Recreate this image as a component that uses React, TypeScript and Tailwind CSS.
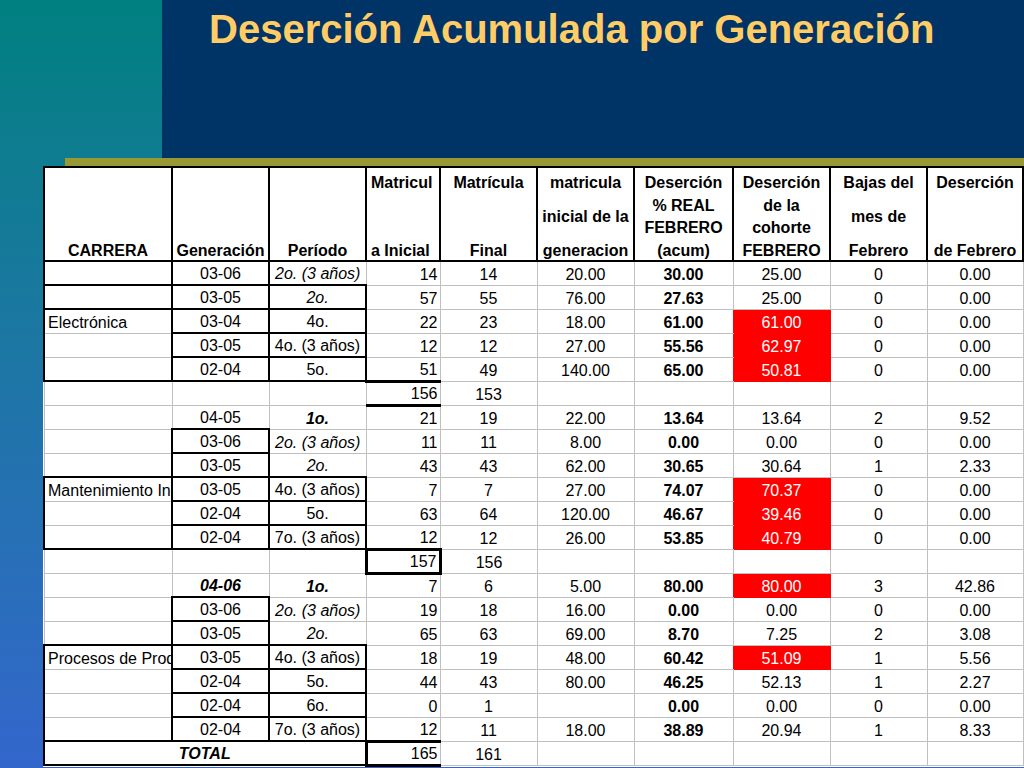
type Row = {
  c: string;
  g: string;
  p: string;
  mi: string;
  mf: string;
  mig: string;
  dr: string;
  dc: string;
  b: string;
  df: string;
  red?: boolean;
  gbi?: boolean;
  total?: boolean;
  // black borders for the first four columns
  bd: [string, string, string, string];
};

const rows: Row[] = [
  { c: "", g: "03-06", p: "2o. (3 años)", mi: "14", mf: "14", mig: "20.00", dr: "30.00", dc: "25.00", b: "0", df: "0.00", bd: ["lb", "lrb", "b", ""] },
  { c: "", g: "03-05", p: "2o.", mi: "57", mf: "55", mig: "76.00", dr: "27.63", dc: "25.00", b: "0", df: "0.00", bd: ["lb", "lrb", "rb", ""] },
  { c: "Electrónica", g: "03-04", p: "4o.", mi: "22", mf: "23", mig: "18.00", dr: "61.00", dc: "61.00", b: "0", df: "0.00", red: true, bd: ["l", "lrb", "rb", ""] },
  { c: "", g: "03-05", p: "4o. (3 años)", mi: "12", mf: "12", mig: "27.00", dr: "55.56", dc: "62.97", b: "0", df: "0.00", red: true, bd: ["l", "lrb", "rb", ""] },
  { c: "", g: "02-04", p: "5o.", mi: "51", mf: "49", mig: "140.00", dr: "65.00", dc: "50.81", b: "0", df: "0.00", red: true, bd: ["lb", "lrb", "rb", "B"] },
  { c: "", g: "", p: "", mi: "156", mf: "153", mig: "", dr: "", dc: "", b: "", df: "", bd: ["", "", "", "B"] },
  { c: "", g: "04-05", p: "1o.", mi: "21", mf: "19", mig: "22.00", dr: "13.64", dc: "13.64", b: "2", df: "9.52", bd: ["", "", "", ""] },
  { c: "", g: "03-06", p: "2o. (3 años)", mi: "11", mf: "11", mig: "8.00", dr: "0.00", dc: "0.00", b: "0", df: "0.00", bd: ["", "tlrb", "", ""] },
  { c: "", g: "03-05", p: "2o.", mi: "43", mf: "43", mig: "62.00", dr: "30.65", dc: "30.64", b: "1", df: "2.33", bd: ["", "lrb", "", ""] },
  { c: "Mantenimiento Industrial", g: "03-05", p: "4o. (3 años)", mi: "7", mf: "7", mig: "27.00", dr: "74.07", dc: "70.37", b: "0", df: "0.00", red: true, bd: ["tl", "lrb", "trb", ""] },
  { c: "", g: "02-04", p: "5o.", mi: "63", mf: "64", mig: "120.00", dr: "46.67", dc: "39.46", b: "0", df: "0.00", red: true, bd: ["l", "lrb", "rb", ""] },
  { c: "", g: "02-04", p: "7o. (3 años)", mi: "12", mf: "12", mig: "26.00", dr: "53.85", dc: "40.79", b: "0", df: "0.00", red: true, bd: ["lb", "lrb", "rb", ""] },
  { c: "", g: "", p: "", mi: "157", mf: "156", mig: "", dr: "", dc: "", b: "", df: "", bd: ["", "", "", "TLRB"] },
  { c: "", g: "04-06", p: "1o.", mi: "7", mf: "6", mig: "5.00", dr: "80.00", dc: "80.00", b: "3", df: "42.86", red: true, gbi: true, bd: ["", "", "", ""] },
  { c: "", g: "03-06", p: "2o. (3 años)", mi: "19", mf: "18", mig: "16.00", dr: "0.00", dc: "0.00", b: "0", df: "0.00", bd: ["", "tlrb", "", ""] },
  { c: "", g: "03-05", p: "2o.", mi: "65", mf: "63", mig: "69.00", dr: "8.70", dc: "7.25", b: "2", df: "3.08", bd: ["", "lrb", "", ""] },
  { c: "Procesos de Producción", g: "03-05", p: "4o. (3 años)", mi: "18", mf: "19", mig: "48.00", dr: "60.42", dc: "51.09", b: "1", df: "5.56", red: true, bd: ["tl", "lrb", "trb", ""] },
  { c: "", g: "02-04", p: "5o.", mi: "44", mf: "43", mig: "80.00", dr: "46.25", dc: "52.13", b: "1", df: "2.27", bd: ["l", "lrb", "rb", ""] },
  { c: "", g: "02-04", p: "6o.", mi: "0", mf: "1", mig: "", dr: "0.00", dc: "0.00", b: "0", df: "0.00", bd: ["l", "lrb", "rb", ""] },
  { c: "", g: "02-04", p: "7o. (3 años)", mi: "12", mf: "11", mig: "18.00", dr: "38.89", dc: "20.94", b: "1", df: "8.33", bd: ["lb", "lrb", "rb", ""] },
  { c: "TOTAL", g: "", p: "", mi: "165", mf: "161", mig: "", dr: "", dc: "", b: "", df: "", total: true, bd: ["lb", "", "", "TLB"] },
];

const SIDES: Record<string, string> = {
  t: "border-t-2 border-t-black",
  b: "border-b-2 border-b-black",
  l: "border-l-2 border-l-black",
  r: "border-r-2 border-r-black",
  T: "border-t-[3px] border-t-black",
  B: "border-b-[3px] border-b-black",
  L: "border-l-[3px] border-l-black",
  R: "border-r-[3px] border-r-black",
};

function sides(spec: string) {
  return spec
    .split("")
    .map((s) => SIDES[s])
    .join(" ");
}

const base = "border border-[#c0c0c0] p-0 align-bottom leading-[18px] pb-[1px] whitespace-nowrap overflow-hidden";

const headers: { lines: string[]; left?: boolean }[] = [
  { lines: ["CARRERA"] },
  { lines: ["Generación"] },
  { lines: ["Período"] },
  { lines: ["Matricul", "a Inicial"], left: true },
  { lines: ["Matrícula", "Final"] },
  { lines: ["matricula", "inicial de la", "generacion"] },
  { lines: ["Deserción", "% REAL", "FEBRERO", "(acum)"] },
  { lines: ["Deserción", "de la", "cohorte", "FEBRERO"] },
  { lines: ["Bajas del", "mes de", "Febrero"] },
  { lines: ["Deserción", "de Febrero"] },
];

function periodClass(p: string) {
  if (p === "1o.") return "font-bold italic";
  if (p.startsWith("2o.")) return "italic";
  return "";
}

export default function App() {
  return (
    <div className="h-[768px] w-[1024px] overflow-hidden bg-gradient-to-b from-[#008080] to-[#3366cc] font-['Liberation_Sans',Arial,sans-serif]">
      <div className="flex h-[158px]">
        <div className="w-[162px] shrink-0" />
        <div className="flex-1 bg-[#003366] pl-[47px] pt-[6px]">
          <h1 className="text-[40px] leading-[46px] font-bold text-[#ffcc66]">Deserción Acumulada por Generación</h1>
        </div>
      </div>
      <div className="ml-[65px] h-[8px] bg-[#999933]" />

      <table className="ml-[43px] w-[979px] table-fixed border-collapse bg-white text-[16px] text-black">
        <colgroup>
          <col className="w-[128px]" />
          <col className="w-[97px]" />
          <col className="w-[97px]" />
          <col className="w-[74px]" />
          <col className="w-[97px]" />
          <col className="w-[97px]" />
          <col className="w-[99px]" />
          <col className="w-[97px]" />
          <col className="w-[97px]" />
          <col className="w-[96px]" />
        </colgroup>
        <thead>
          <tr className="h-[94px]">
            {headers.map((h, i) => (
              <th
                key={i}
                className={`border-2 border-black p-0 align-top text-[16px] leading-[18px] font-bold ${
                  h.left ? "text-left" : "text-center"
                }`}
              >
                <div
                  className={`flex h-[92px] flex-col pt-[6px] ${
                    h.lines.length === 1 ? "justify-end" : "justify-between"
                  } ${h.left ? "pl-[4px]" : ""}`}
                >
                  {h.lines.map((l) => (
                    <span key={l} className="whitespace-nowrap">
                      {l}
                    </span>
                  ))}
                </div>
              </th>
            ))}
          </tr>
        </thead>
        <tbody>
          {rows.map((r, i) => (
            <tr key={i} className="h-[24px]">
              {r.total ? (
                <td colSpan={3} className={`${base} ${sides(r.bd[0])} text-center font-bold italic`}>
                  {r.c}
                </td>
              ) : (
                <>
                  <td className={`${base} ${sides(r.bd[0])} pl-[3px] text-left`}>{r.c}</td>
                  <td className={`${base} ${sides(r.bd[1])} text-center ${r.gbi ? "font-bold italic" : ""}`}>{r.g}</td>
                  <td className={`${base} ${sides(r.bd[2])} text-center ${periodClass(r.p)}`}>{r.p}</td>
                </>
              )}
              <td className={`${base} ${sides(r.bd[3])} pr-[2px] text-right`}>{r.mi}</td>
              <td className={`${base} text-center`}>{r.mf}</td>
              <td className={`${base} text-center`}>{r.mig}</td>
              <td className={`${base} text-center font-bold ${r.red ? "border-r-[#ff0000]" : ""}`}>{r.dr}</td>
              <td className={`${base} text-center ${r.red ? "border-[#ff0000] bg-[#ff0000] text-white" : ""}`}>{r.dc}</td>
              <td className={`${base} text-center`}>{r.b}</td>
              <td className={`${base} text-center`}>{r.df}</td>
            </tr>
          ))}
        </tbody>
      </table>
    </div>
  );
}
